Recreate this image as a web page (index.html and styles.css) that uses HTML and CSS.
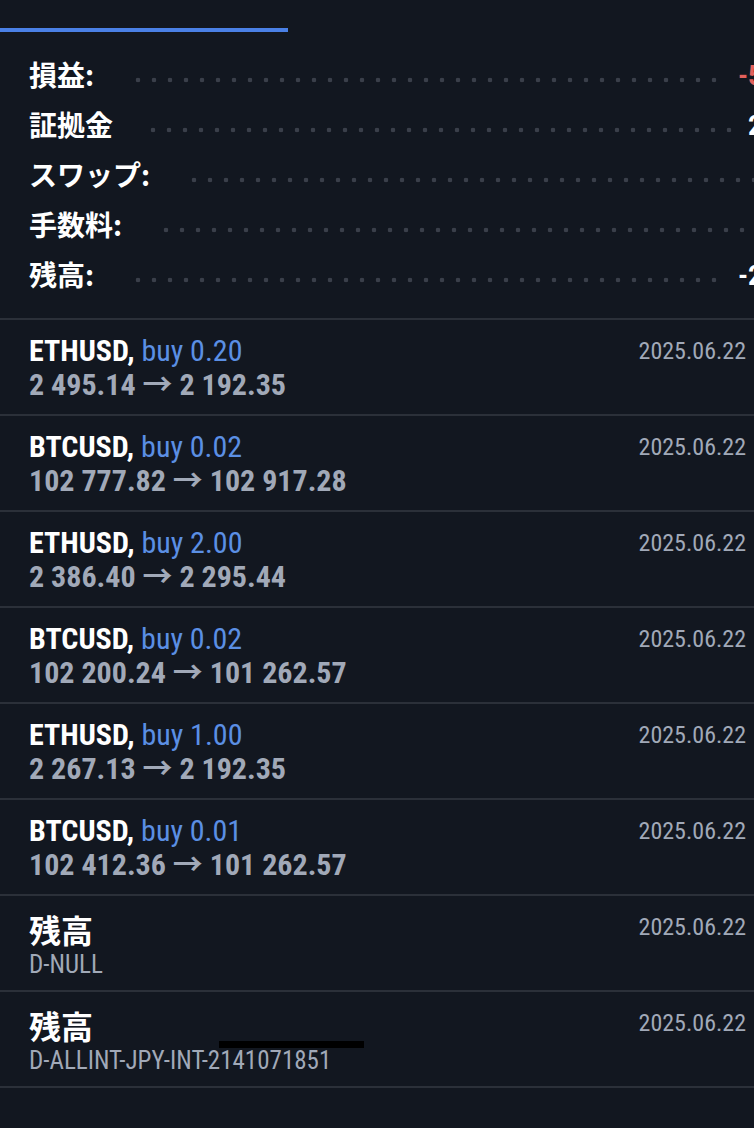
FILE: index.html
```html
<!DOCTYPE html>
<html lang="ja">
<head>
<meta charset="utf-8">
<link rel="stylesheet" href="styles.css">
</head>
<body>
<div class="screen">
  <div class="tabs"><div class="tab-indicator"></div></div>

  <div class="summary">
    <div class="srow">
      <span class="slabel">損益:</span><span class="dots"></span><span class="sval neg v1">-5 412.38</span>
    </div>
    <div class="srow">
      <span class="slabel">証拠金</span><span class="dots dots-tight"></span><span class="sval v2">2 102.00</span>
    </div>
    <div class="srow">
      <span class="slabel">スワップ:</span><span class="dots"></span><span class="sval v3">0.00</span>
    </div>
    <div class="srow">
      <span class="slabel">手数料:</span><span class="dots"></span><span class="sval v4">0.00</span>
    </div>
    <div class="srow">
      <span class="slabel">残高:</span><span class="dots"></span><span class="sval v5">-2 310.38</span>
    </div>
  </div>

  <div class="deals">
    <div class="deal">
      <div class="dmain">
        <div class="dtitle"><span class="sym">ETHUSD,</span> <span class="side">buy 0.20</span></div>
        <div class="dprice">2 495.14 → 2 192.35</div>
      </div>
      <div class="ddate">2025.06.22</div>
    </div>
    <div class="deal">
      <div class="dmain">
        <div class="dtitle"><span class="sym">BTCUSD,</span> <span class="side">buy 0.02</span></div>
        <div class="dprice">102 777.82 → 102 917.28</div>
      </div>
      <div class="ddate">2025.06.22</div>
    </div>
    <div class="deal">
      <div class="dmain">
        <div class="dtitle"><span class="sym">ETHUSD,</span> <span class="side">buy 2.00</span></div>
        <div class="dprice">2 386.40 → 2 295.44</div>
      </div>
      <div class="ddate">2025.06.22</div>
    </div>
    <div class="deal">
      <div class="dmain">
        <div class="dtitle"><span class="sym">BTCUSD,</span> <span class="side">buy 0.02</span></div>
        <div class="dprice">102 200.24 → 101 262.57</div>
      </div>
      <div class="ddate">2025.06.22</div>
    </div>
    <div class="deal">
      <div class="dmain">
        <div class="dtitle"><span class="sym">ETHUSD,</span> <span class="side">buy 1.00</span></div>
        <div class="dprice">2 267.13 → 2 192.35</div>
      </div>
      <div class="ddate">2025.06.22</div>
    </div>
    <div class="deal">
      <div class="dmain">
        <div class="dtitle"><span class="sym">BTCUSD,</span> <span class="side">buy 0.01</span></div>
        <div class="dprice">102 412.36 → 101 262.57</div>
      </div>
      <div class="ddate">2025.06.22</div>
    </div>
    <div class="deal">
      <div class="dmain">
        <div class="dtitle jp">残高</div>
        <div class="dnote">D-NULL</div>
      </div>
      <div class="ddate">2025.06.22</div>
    </div>
    <div class="deal last">
      <div class="dmain">
        <div class="dtitle jp">残高</div>
        <div class="dnote">D-ALLINT-JPY-INT-2141071851<span class="redact"></span></div>
      </div>
      <div class="ddate">2025.06.22</div>
    </div>
  </div>
</div>
</body>
</html>
```
FILE: styles.css
```css
html, body {
  margin: 0;
  padding: 0;
  background: #121720;
}
body {
  width: 754px;
  height: 1128px;
  overflow: hidden;
  font-family: "Roboto Condensed", "Roboto", "Noto Sans CJK JP", sans-serif;
  font-stretch: condensed;
  color: #ffffff;
}
.screen {
  width: 754px;
  overflow: hidden;
}
.tabs {
  height: 32px;
  display: flex;
  align-items: flex-end;
}
.tab-indicator {
  width: 288px;
  height: 4px;
  background: #4a80e6;
}
.summary {
  padding: 18px 0 18px 29px;
}
.srow {
  width: 871px;
  height: 50px;
  display: flex;
  align-items: center;
}
.slabel {
  font-family: "Noto Sans CJK JP", sans-serif;
  font-weight: 700;
  font-size: 28px;
  line-height: 40px;
  margin-top: -2px;
  color: #ffffff;
  white-space: nowrap;
}
.dots {
  flex: 1;
  height: 6px;
  margin: 10px 14px 0 36px;
  background-image: radial-gradient(circle at center, #3a3f4a 2px, transparent 2.6px);
  background-size: 16px 6px;
  background-position: left center;
  background-repeat: repeat-x;
}
.dots-tight {
  margin-left: 32px;
}
.sval {
  font-family: "Roboto", sans-serif;
  font-weight: 700;
  font-size: 28px;
  color: #ffffff;
  white-space: nowrap;
}
.sval.neg { color: #e2615c; }
.v1 { width: 162px; }
.v2 { width: 152px; }
.v3 { width: 110px; }
.v4 { width: 120px; }
.v5 { width: 162px; }

.deals {
  display: flex;
  flex-direction: column;
}
.deal {
  height: 80px;
  border-top: 2px solid #2b3039;
  padding: 14px 8px 0 29px;
  display: flex;
  align-items: flex-start;
  justify-content: space-between;
}
.deal.last {
  border-bottom: 2px solid #2b3039;
}
.dmain {
  display: flex;
  flex-direction: column;
  position: relative;
}
.dtitle {
  font-size: 30px;
  line-height: 34px;
  white-space: nowrap;
}
.sym {
  font-weight: 700;
  color: #ffffff;
}
.side {
  color: #5b8fe4;
}
.dtitle.jp {
  font-family: "Noto Sans CJK JP", sans-serif;
  font-weight: 700;
  font-size: 32px;
  line-height: 38px;
}
.dprice {
  font-size: 30px;
  line-height: 34px;
  font-weight: 700;
  color: #a1a9b8;
  white-space: nowrap;
}
.dnote {
  font-size: 25px;
  line-height: 34px;
  color: #a1a9b8;
  white-space: nowrap;
  position: relative;
}
.ddate {
  font-size: 24px;
  line-height: 34px;
  color: #a1a9b8;
}
.redact {
  position: absolute;
  left: 190px;
  top: -3px;
  width: 145px;
  height: 7px;
  background: #000000;
}
```
